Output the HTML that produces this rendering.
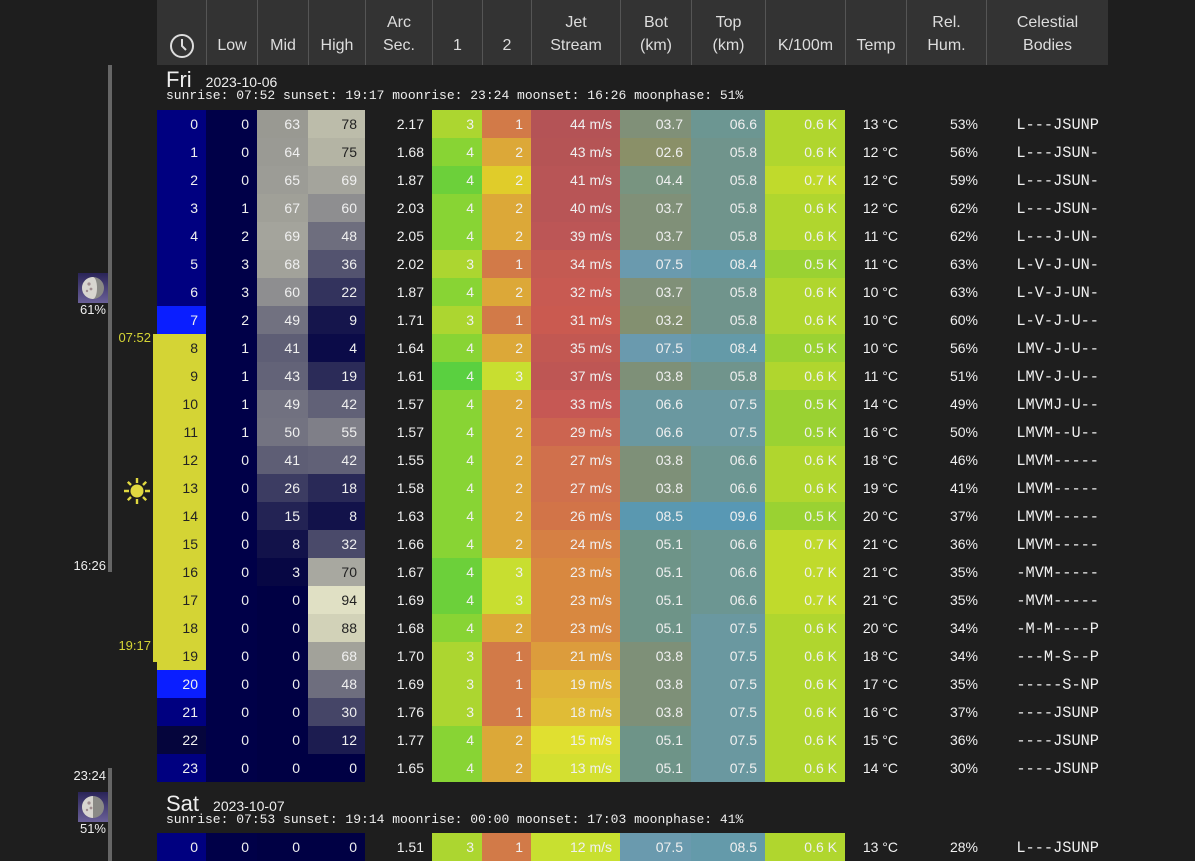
<!DOCTYPE html>
<html><head><meta charset="utf-8"><style>
*{margin:0;padding:0;box-sizing:border-box}
body{width:1195px;height:861px;background:#1e1e1e;overflow:hidden;position:relative;font-family:"Liberation Sans",sans-serif;color:#eee}
.hdr{position:absolute;left:157px;top:0;width:951px;height:65px;background:#333}
.hc{position:absolute;top:0;height:65px;color:#ddd;font-size:16px;text-align:center;line-height:23px;display:flex;align-items:flex-end;justify-content:center;padding-bottom:8px;border-left:1px solid #555}
.hc.first{border-left:none}
table{position:absolute;left:157px;border-collapse:collapse;table-layout:fixed;font-size:14px}
td{height:28px;padding:0 8px 0 0;text-align:right;white-space:nowrap;color:#f0f0f0;overflow:hidden}
td.c{font-family:"Liberation Mono",monospace;font-size:15.3px;padding-right:9px;padding-top:1px}
td.d{color:#222}
.day{position:absolute;left:166px;color:#eee}
.day b{font-weight:normal;font-size:22px}
.day span{font-size:14px;margin-left:14px}
.info{position:absolute;left:166px;font-family:"Liberation Mono",monospace;font-size:13px;color:#eee}
.lbl{position:absolute;font-size:13px;text-align:right}
.bar{position:absolute}
</style></head><body>
<div class="hdr"></div>
<div class="hc first" style="left:157px;width:49px;padding-bottom:6px"><svg width="26" height="26" viewBox="0 0 26 26"><circle cx="13" cy="13" r="11" fill="none" stroke="#ddd" stroke-width="2"/><path d="M13 6V13L17 17" fill="none" stroke="#ddd" stroke-width="2"/></svg></div>
<div class="hc" style="left:206px;width:51px">Low</div>
<div class="hc" style="left:257px;width:51px">Mid</div>
<div class="hc" style="left:308px;width:57px">High</div>
<div class="hc" style="left:365px;width:67px">Arc<br>Sec.</div>
<div class="hc" style="left:432px;width:50px">1</div>
<div class="hc" style="left:482px;width:49px">2</div>
<div class="hc" style="left:531px;width:89px">Jet<br>Stream</div>
<div class="hc" style="left:620px;width:71px">Bot<br>(km)</div>
<div class="hc" style="left:691px;width:74px">Top<br>(km)</div>
<div class="hc" style="left:765px;width:80px">K/100m</div>
<div class="hc" style="left:845px;width:61px">Temp</div>
<div class="hc" style="left:906px;width:80px">Rel.<br>Hum.</div>
<div class="hc" style="left:986px;width:122px">Celestial<br>Bodies</div>

<div class="bar" style="left:108px;top:65px;width:4px;height:507px;background:#666"></div>
<div class="bar" style="left:108px;top:768px;width:4px;height:93px;background:#666"></div>
<div class="bar" style="left:153px;top:334px;width:5px;height:328px;background:#d4d435"></div>

<svg style="position:absolute;left:78px;top:273px" width="30" height="30" viewBox="0 0 30 30"><defs><linearGradient id="g" x1="0" y1="0" x2="0" y2="1"><stop offset="0" stop-color="#2a2458"/><stop offset="1" stop-color="#6a6098"/></linearGradient><clipPath id="cp"><circle cx="15" cy="15" r="11"/></clipPath></defs><rect width="30" height="30" fill="url(#g)"/><circle cx="15" cy="15" r="11" fill="#8a8a86"/><g clip-path="url(#cp)"><rect x="0" y="0" width="15" height="30" fill="#d8d6d0"/><ellipse cx="15" cy="15" rx="4" ry="11" fill="#d8d6d0"/></g><circle cx="11" cy="11" r="1.6" fill="#a08e90"/><circle cx="13" cy="16" r="1.4" fill="#a08e90"/><circle cx="9" cy="18" r="1.2" fill="#a08e90"/></svg>
<div class="lbl" style="left:70px;top:302px;width:36px">61%</div>
<div class="lbl" style="left:100px;top:330px;width:51px;color:#d4d435">07:52</div>
<svg style="position:absolute;left:122px;top:476px" width="30" height="30" viewBox="0 0 30 30"><circle cx="15" cy="15" r="6.5" fill="#e0d840"/><g stroke="#e0d840" stroke-width="2.4" stroke-linecap="butt"><path d="M15 2V7M15 23V28M2 15H7M23 15H28M5.8 5.8L9 9M21 21L24.2 24.2M5.8 24.2L9 21M21 9L24.2 5.8"/></g></svg>
<div class="lbl" style="left:60px;top:558px;width:46px">16:26</div>
<div class="lbl" style="left:100px;top:638px;width:51px;color:#d4d435">19:17</div>
<div class="lbl" style="left:60px;top:768px;width:46px">23:24</div>
<svg style="position:absolute;left:78px;top:792px" width="30" height="30" viewBox="0 0 30 30"><defs><linearGradient id="g2" x1="0" y1="0" x2="0" y2="1"><stop offset="0" stop-color="#2a2458"/><stop offset="1" stop-color="#6a6098"/></linearGradient><clipPath id="cp2"><circle cx="15" cy="15" r="11"/></clipPath></defs><rect width="30" height="30" fill="url(#g2)"/><circle cx="15" cy="15" r="11" fill="#8a8a86"/><g clip-path="url(#cp2)"><rect x="0" y="0" width="15" height="30" fill="#d8d6d0"/></g><circle cx="11" cy="11" r="1.6" fill="#a08e90"/><circle cx="13" cy="16" r="1.4" fill="#a08e90"/><circle cx="9" cy="18" r="1.2" fill="#a08e90"/></svg>
<div class="lbl" style="left:70px;top:821px;width:36px">51%</div>

<div class="day" style="top:67px"><b>Fri</b><span>2023-10-06</span></div>
<div class="info" style="top:88px">sunrise: 07:52 sunset: 19:17 moonrise: 23:24 moonset: 16:26 moonphase: 51%</div>
<div class="day" style="top:791px"><b>Sat</b><span>2023-10-07</span></div>
<div class="info" style="top:812px">sunrise: 07:53 sunset: 19:14 moonrise: 00:00 moonset: 17:03 moonphase: 41%</div>

<table style="top:110px">
<colgroup><col style="width:49px"><col style="width:51px"><col style="width:51px"><col style="width:57px"><col style="width:67px"><col style="width:50px"><col style="width:49px"><col style="width:89px"><col style="width:71px"><col style="width:74px"><col style="width:80px"><col style="width:61px"><col style="width:80px"><col style="width:122px"></colgroup>
<tr><td style="background:#000080">0</td><td style="background:#000048">0</td><td style="background:#999992">63</td><td class="d" style="background:#bcbcaa">78</td><td>2.17</td><td style="background:#acd630">3</td><td style="background:#d27a48">1</td><td style="background:#b45356">44 m/s</td><td style="background:#809078">03.7</td><td style="background:#6c9692">06.6</td><td style="background:#b0d62e">0.6 K</td><td>13 °C</td><td>53%</td><td class="c">L---JSUNP</td></tr>
<tr><td style="background:#000080">1</td><td style="background:#000048">0</td><td style="background:#9a9a94">64</td><td class="d" style="background:#b4b4a4">75</td><td>1.68</td><td style="background:#88d434">4</td><td style="background:#dca838">2</td><td style="background:#b55455">43 m/s</td><td style="background:#8a9068">02.6</td><td style="background:#70948c">05.8</td><td style="background:#b0d62e">0.6 K</td><td>12 °C</td><td>56%</td><td class="c">L---JSUN-</td></tr>
<tr><td style="background:#000080">2</td><td style="background:#000048">0</td><td style="background:#9c9c96">65</td><td style="background:#a4a49c">69</td><td>1.87</td><td style="background:#6cd03a">4</td><td style="background:#e0cc2a">2</td><td style="background:#b85556">41 m/s</td><td style="background:#789480">04.4</td><td style="background:#70948c">05.8</td><td style="background:#c0da2c">0.7 K</td><td>12 °C</td><td>59%</td><td class="c">L---JSUN-</td></tr>
<tr><td style="background:#000080">3</td><td style="background:#000048">1</td><td style="background:#a0a098">67</td><td style="background:#8e8e90">60</td><td>2.03</td><td style="background:#88d434">4</td><td style="background:#dca838">2</td><td style="background:#b85556">40 m/s</td><td style="background:#809078">03.7</td><td style="background:#70948c">05.8</td><td style="background:#b0d62e">0.6 K</td><td>12 °C</td><td>62%</td><td class="c">L---JSUN-</td></tr>
<tr><td style="background:#000080">4</td><td style="background:#000048">2</td><td style="background:#a4a49c">69</td><td style="background:#6e6e7e">48</td><td>2.05</td><td style="background:#88d434">4</td><td style="background:#dca838">2</td><td style="background:#bc5656">39 m/s</td><td style="background:#809078">03.7</td><td style="background:#70948c">05.8</td><td style="background:#b0d62e">0.6 K</td><td>11 °C</td><td>62%</td><td class="c">L---J-UN-</td></tr>
<tr><td style="background:#000080">5</td><td style="background:#000048">3</td><td style="background:#a2a29a">68</td><td style="background:#53536f">36</td><td>2.02</td><td style="background:#acd630">3</td><td style="background:#d27a48">1</td><td style="background:#c45a52">34 m/s</td><td style="background:#6a9aae">07.5</td><td style="background:#649aa8">08.4</td><td style="background:#9ad232">0.5 K</td><td>11 °C</td><td>63%</td><td class="c">L-V-J-UN-</td></tr>
<tr><td style="background:#000080">6</td><td style="background:#000048">3</td><td style="background:#8e8e90">60</td><td style="background:#33335d">22</td><td>1.87</td><td style="background:#88d434">4</td><td style="background:#dca838">2</td><td style="background:#c85a52">32 m/s</td><td style="background:#809078">03.7</td><td style="background:#70948c">05.8</td><td style="background:#b0d62e">0.6 K</td><td>10 °C</td><td>63%</td><td class="c">L-V-J-UN-</td></tr>
<tr><td style="background:#0a1eff">7</td><td style="background:#000048">2</td><td style="background:#717180">49</td><td style="background:#15154c">9</td><td>1.71</td><td style="background:#acd630">3</td><td style="background:#d27a48">1</td><td style="background:#ca5a50">31 m/s</td><td style="background:#839070">03.2</td><td style="background:#70948c">05.8</td><td style="background:#b0d62e">0.6 K</td><td>10 °C</td><td>60%</td><td class="c">L-V-J-U--</td></tr>
<tr><td class="d" style="background:#d4d435">8</td><td style="background:#000048">1</td><td style="background:#5e5e75">41</td><td style="background:#0b0b48">4</td><td>1.64</td><td style="background:#88d434">4</td><td style="background:#dca838">2</td><td style="background:#c25852">35 m/s</td><td style="background:#6a9aae">07.5</td><td style="background:#649aa8">08.4</td><td style="background:#9ad232">0.5 K</td><td>10 °C</td><td>56%</td><td class="c">LMV-J-U--</td></tr>
<tr><td class="d" style="background:#d4d435">9</td><td style="background:#000048">1</td><td style="background:#636378">43</td><td style="background:#2b2b58">19</td><td>1.61</td><td style="background:#5ad040">4</td><td style="background:#c8de30">3</td><td style="background:#be5654">37 m/s</td><td style="background:#7e9078">03.8</td><td style="background:#70948c">05.8</td><td style="background:#b0d62e">0.6 K</td><td>11 °C</td><td>51%</td><td class="c">LMV-J-U--</td></tr>
<tr><td class="d" style="background:#d4d435">10</td><td style="background:#000048">1</td><td style="background:#717180">49</td><td style="background:#616177">42</td><td>1.57</td><td style="background:#88d434">4</td><td style="background:#dca838">2</td><td style="background:#c65854">33 m/s</td><td style="background:#6a98a0">06.6</td><td style="background:#6a98a0">07.5</td><td style="background:#9ad232">0.5 K</td><td>14 °C</td><td>49%</td><td class="c">LMVMJ-U--</td></tr>
<tr><td class="d" style="background:#d4d435">11</td><td style="background:#000048">1</td><td style="background:#737381">50</td><td style="background:#7f7f88">55</td><td>1.57</td><td style="background:#88d434">4</td><td style="background:#dca838">2</td><td style="background:#cc6450">29 m/s</td><td style="background:#6a98a0">06.6</td><td style="background:#6a98a0">07.5</td><td style="background:#9ad232">0.5 K</td><td>16 °C</td><td>50%</td><td class="c">LMVM--U--</td></tr>
<tr><td class="d" style="background:#d4d435">12</td><td style="background:#000048">0</td><td style="background:#5e5e75">41</td><td style="background:#616177">42</td><td>1.55</td><td style="background:#88d434">4</td><td style="background:#dca838">2</td><td style="background:#d0704c">27 m/s</td><td style="background:#7e9078">03.8</td><td style="background:#6c9692">06.6</td><td style="background:#b0d62e">0.6 K</td><td>18 °C</td><td>46%</td><td class="c">LMVM-----</td></tr>
<tr><td class="d" style="background:#d4d435">13</td><td style="background:#000048">0</td><td style="background:#3c3c62">26</td><td style="background:#292957">18</td><td>1.58</td><td style="background:#88d434">4</td><td style="background:#dca838">2</td><td style="background:#d0704c">27 m/s</td><td style="background:#7e9078">03.8</td><td style="background:#6c9692">06.6</td><td style="background:#b0d62e">0.6 K</td><td>19 °C</td><td>41%</td><td class="c">LMVM-----</td></tr>
<tr><td class="d" style="background:#d4d435">14</td><td style="background:#000048">0</td><td style="background:#232354">15</td><td style="background:#12124a">8</td><td>1.63</td><td style="background:#88d434">4</td><td style="background:#dca838">2</td><td style="background:#d27448">26 m/s</td><td style="background:#5a98b0">08.5</td><td style="background:#5898b4">09.6</td><td style="background:#9ad232">0.5 K</td><td>20 °C</td><td>37%</td><td class="c">LMVM-----</td></tr>
<tr><td class="d" style="background:#d4d435">15</td><td style="background:#000048">0</td><td style="background:#12124a">8</td><td style="background:#4a4a6a">32</td><td>1.66</td><td style="background:#88d434">4</td><td style="background:#dca838">2</td><td style="background:#d68044">24 m/s</td><td style="background:#6e9488">05.1</td><td style="background:#6c9692">06.6</td><td style="background:#c0da2c">0.7 K</td><td>21 °C</td><td>36%</td><td class="c">LMVM-----</td></tr>
<tr><td class="d" style="background:#d4d435">16</td><td style="background:#000048">0</td><td style="background:#070744">3</td><td class="d" style="background:#a8a8a0">70</td><td>1.67</td><td style="background:#6cd03a">4</td><td style="background:#c8de30">3</td><td style="background:#d88840">23 m/s</td><td style="background:#6e9488">05.1</td><td style="background:#6c9692">06.6</td><td style="background:#c0da2c">0.7 K</td><td>21 °C</td><td>35%</td><td class="c">-MVM-----</td></tr>
<tr><td class="d" style="background:#d4d435">17</td><td style="background:#000048">0</td><td style="background:#000044">0</td><td class="d" style="background:#e0e0c4">94</td><td>1.69</td><td style="background:#6cd03a">4</td><td style="background:#c8de30">3</td><td style="background:#d88840">23 m/s</td><td style="background:#6e9488">05.1</td><td style="background:#6c9692">06.6</td><td style="background:#c0da2c">0.7 K</td><td>21 °C</td><td>35%</td><td class="c">-MVM-----</td></tr>
<tr><td class="d" style="background:#d4d435">18</td><td style="background:#000048">0</td><td style="background:#000044">0</td><td class="d" style="background:#d2d2b8">88</td><td>1.68</td><td style="background:#88d434">4</td><td style="background:#dca838">2</td><td style="background:#d88840">23 m/s</td><td style="background:#6e9488">05.1</td><td style="background:#6a98a0">07.5</td><td style="background:#b0d62e">0.6 K</td><td>20 °C</td><td>34%</td><td class="c">-M-M----P</td></tr>
<tr><td class="d" style="background:#d4d435">19</td><td style="background:#000048">0</td><td style="background:#000044">0</td><td style="background:#a2a29a">68</td><td>1.70</td><td style="background:#acd630">3</td><td style="background:#d27a48">1</td><td style="background:#dc9c3c">21 m/s</td><td style="background:#7e9078">03.8</td><td style="background:#6a98a0">07.5</td><td style="background:#b0d62e">0.6 K</td><td>18 °C</td><td>34%</td><td class="c">---M-S--P</td></tr>
<tr><td style="background:#0a1eff">20</td><td style="background:#000048">0</td><td style="background:#000044">0</td><td style="background:#6e6e7e">48</td><td>1.69</td><td style="background:#acd630">3</td><td style="background:#d27a48">1</td><td style="background:#e0b238">19 m/s</td><td style="background:#7e9078">03.8</td><td style="background:#6a98a0">07.5</td><td style="background:#b0d62e">0.6 K</td><td>17 °C</td><td>35%</td><td class="c">-----S-NP</td></tr>
<tr><td style="background:#000080">21</td><td style="background:#000048">0</td><td style="background:#000044">0</td><td style="background:#454567">30</td><td>1.76</td><td style="background:#acd630">3</td><td style="background:#d27a48">1</td><td style="background:#e0bc36">18 m/s</td><td style="background:#7e9078">03.8</td><td style="background:#6a98a0">07.5</td><td style="background:#b0d62e">0.6 K</td><td>16 °C</td><td>37%</td><td class="c">----JSUNP</td></tr>
<tr><td style="background:#05053c">22</td><td style="background:#000048">0</td><td style="background:#000044">0</td><td style="background:#1c1c50">12</td><td>1.77</td><td style="background:#88d434">4</td><td style="background:#dca838">2</td><td style="background:#e0e030">15 m/s</td><td style="background:#6e9488">05.1</td><td style="background:#6a98a0">07.5</td><td style="background:#b0d62e">0.6 K</td><td>15 °C</td><td>36%</td><td class="c">----JSUNP</td></tr>
<tr><td style="background:#000080">23</td><td style="background:#000048">0</td><td style="background:#000044">0</td><td style="background:#000044">0</td><td>1.65</td><td style="background:#88d434">4</td><td style="background:#dca838">2</td><td style="background:#d4e030">13 m/s</td><td style="background:#6e9488">05.1</td><td style="background:#6a98a0">07.5</td><td style="background:#b0d62e">0.6 K</td><td>14 °C</td><td>30%</td><td class="c">----JSUNP</td></tr>
</table>
<table style="top:833px">
<colgroup><col style="width:49px"><col style="width:51px"><col style="width:51px"><col style="width:57px"><col style="width:67px"><col style="width:50px"><col style="width:49px"><col style="width:89px"><col style="width:71px"><col style="width:74px"><col style="width:80px"><col style="width:61px"><col style="width:80px"><col style="width:122px"></colgroup>
<tr><td style="background:#000080">0</td><td style="background:#000048">0</td><td style="background:#000044">0</td><td style="background:#000044">0</td><td>1.51</td><td style="background:#acd630">3</td><td style="background:#d27a48">1</td><td style="background:#c8e030">12 m/s</td><td style="background:#6a9aae">07.5</td><td style="background:#649aaa">08.5</td><td style="background:#b0d62e">0.6 K</td><td>13 °C</td><td>28%</td><td class="c">L---JSUNP</td></tr>
</table>
</body></html>
